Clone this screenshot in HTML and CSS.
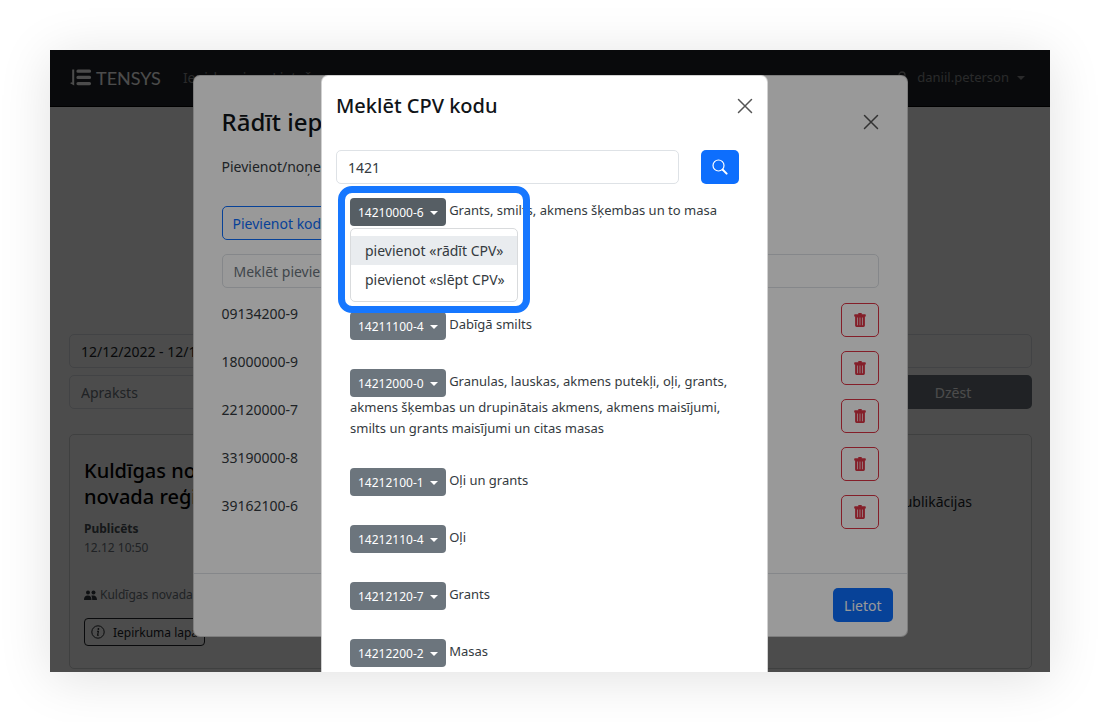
FILE: index.html
```html
<!DOCTYPE html>
<html lang="lv">
<head>
<meta charset="utf-8">
<title>Tensys</title>
<link rel="stylesheet" href="styles.css">
</head>
<body>
<svg class="sprite" aria-hidden="true">
  <symbol id="trash" viewBox="0 0 12 14"><path d="M4.300 0h3.400v1.200h3.300a.8.8 0 0 1 .8.8v1.400h-.9v9.200a1.400 1.400 0 0 1-1.400 1.400h-7a1.400 1.400 0 0 1-1.400-1.400V3.400H.2V2a.8.8 0 0 1 .8-.8h3.300zM3.200 4.400v7.800h.7V4.400zm2.450 0v7.800h.7V4.400zm2.450 0v7.800h.7V4.400z" fill="currentColor" fill-rule="evenodd"/></symbol>
  <symbol id="cross" viewBox="0 0 16 16"><path d="M1.500 1.500l13 13M14.500 1.500l-13 13" fill="none" stroke="currentColor" stroke-width="1.500" stroke-linecap="round"/></symbol>
</svg>
<div class="window">
  <header class="navbar">
    <a class="brand" href="#">
      <svg width="22" height="17" viewBox="0 0 22 17" aria-hidden="true"><path d="M2.200 .6h2v15.900l-4-2.200 1-1 1 .5z" fill="currentColor"/><path d="M8 2.200h11.500M8 8.400h11.500M8 14.600h11.500" stroke="currentColor" stroke-width="3.200" stroke-linecap="round"/></svg>
      TENSYS
    </a>
    <nav class="nav-links">
      <a href="#">Iepirkumi</a>
      <a href="#">Lietošana</a>
    </nav>
    <button class="user" type="button">
      <svg width="14" height="14" viewBox="0 0 14 14" aria-hidden="true"><circle cx="7" cy="4" r="3" fill="none" stroke="currentColor" stroke-width="1.300"/><path d="M1.500 13c0-3 2-5 5.500-5s5.500 2 5.500 5" fill="none" stroke="currentColor" stroke-width="1.300"/></svg>
      daniil.peterson <span class="caret"></span>
    </button>
  </header>
  <main class="page">
    <form class="filters">
      <input class="field" type="text" aria-label="Periods" value="12/12/2022 - 12/12/2022">
      <div class="filter-row">
        <input class="field" type="text" aria-label="Apraksts" placeholder="Apraksts">
        <button class="btn secondary" type="button">Dzēst</button>
      </div>
    </form>
    <article class="card">
      <div class="card-main">
        <h2 class="card-title">Kuldīgas novada<br>novada reģions</h2>
        <p class="meta"><strong>Publicēts</strong><br>12.12 10:50</p>
        <p class="org">
          <svg width="13" height="10" viewBox="0 0 13 10" aria-hidden="true" fill="currentColor"><circle cx="4" cy="2.500" r="2"/><circle cx="9.500" cy="2.500" r="2"/><path d="M0 10c0-3 1-4.600 3.800-4.600S7.500 7 7.500 10zM8.200 10c0-2-.2-3.200-1-4.200 3.500-1.200 5.800.4 5.800 4.200z"/></svg>
          Kuldīgas novada
        </p>
        <a class="page-link" href="#">
          <svg width="14" height="14" viewBox="0 0 14 14" aria-hidden="true"><circle cx="7" cy="7" r="6.200" fill="none" stroke="currentColor"/><circle cx="7.400" cy="4" r=".9" fill="currentColor"/><path d="M6 6.200h1.400L6.600 10.300h1.200" fill="none" stroke="currentColor" stroke-width="1.100"/></svg>
          Iepirkuma lapa
        </a>
      </div>
      <a class="card-side" href="#">Publikācijas</a>
    </article>
  </main>

  <div class="overlay">
    <section class="dialog codes" aria-label="Rādīt iepirkumus">
      <header class="dialog-head">
        <h1 class="codes-title">Rādīt iepirkumus</h1>
        <button class="close" type="button" aria-label="Aizvērt"><svg width="16" height="16"><use href="#cross"/></svg></button>
      </header>
      <div class="codes-body">
        <p class="lead">Pievienot/noņemt kodus</p>
        <button class="btn outline" type="button">Pievienot kodu</button>
        <input class="field code-search" type="text" aria-label="Meklēt pievienotos" placeholder="Meklēt pievienotos">
        <ul class="code-list">
          <li><span>09134200-9</span><button class="btn delete" type="button" aria-label="Dzēst 09134200-9"><svg width="12" height="14"><use href="#trash"/></svg></button></li>
          <li><span>18000000-9</span><button class="btn delete" type="button" aria-label="Dzēst 18000000-9"><svg width="12" height="14"><use href="#trash"/></svg></button></li>
          <li><span>22120000-7</span><button class="btn delete" type="button" aria-label="Dzēst 22120000-7"><svg width="12" height="14"><use href="#trash"/></svg></button></li>
          <li><span>33190000-8</span><button class="btn delete" type="button" aria-label="Dzēst 33190000-8"><svg width="12" height="14"><use href="#trash"/></svg></button></li>
          <li><span>39162100-6</span><button class="btn delete" type="button" aria-label="Dzēst 39162100-6"><svg width="12" height="14"><use href="#trash"/></svg></button></li>
        </ul>
      </div>
      <footer class="dialog-foot"><button class="btn primary" type="button">Lietot</button></footer>
    </section>
  </div>

  <div class="overlay top">
    <section class="dialog cpv" aria-label="Meklēt CPV kodu">
      <header class="cpv-head">
        <h1 class="cpv-title">Meklēt CPV kodu</h1>
        <button class="close" type="button" aria-label="Aizvērt"><svg width="16" height="16"><use href="#cross"/></svg></button>
      </header>
      <form class="search">
        <input class="field" type="text" aria-label="CPV kods" value="1421">
        <button class="btn primary icon" type="button" aria-label="Meklēt"><svg width="16" height="16" viewBox="0 0 16 16" aria-hidden="true"><circle cx="6.500" cy="6.500" r="5.500" fill="none" stroke="currentColor" stroke-width="1.200"/><path d="M10.800 10.800l3.800 3.800" stroke="currentColor" stroke-width="2" stroke-linecap="round"/></svg></button>
      </form>
      <ul class="results">
        <li class="open">
          <button class="tag active" type="button">14210000-6 <span class="caret"></span></button> Grants, smilts, akmens šķembas un to masa
          <div class="menu">
            <button class="item hover" type="button">pievienot «rādīt CPV»</button>
            <button class="item" type="button">pievienot «slēpt CPV»</button>
          </div>
          <div class="focus-frame"></div>
        </li>
        <li><button class="tag" type="button">14211000-3 <span class="caret"></span></button> Smilts</li>
        <li><button class="tag" type="button">14211100-4 <span class="caret"></span></button> Dabīgā smilts</li>
        <li><button class="tag" type="button">14212000-0 <span class="caret"></span></button> Granulas, lauskas, akmens putekļi, oļi, grants, akmens šķembas un drupinātais akmens, akmens maisījumi, smilts un grants maisījumi un citas masas</li>
        <li><button class="tag" type="button">14212100-1 <span class="caret"></span></button> Oļi un grants</li>
        <li><button class="tag" type="button">14212110-4 <span class="caret"></span></button> Oļi</li>
        <li><button class="tag" type="button">14212120-7 <span class="caret"></span></button> Grants</li>
        <li><button class="tag" type="button">14212200-2 <span class="caret"></span></button> Masas</li>
      </ul>
    </section>
  </div>
</div>
</body>
</html>
```
FILE: styles.css
```css
* { box-sizing: border-box; }
body {
  margin: 0;
  background: #fff;
  color: #343a40;
  font: 14px/21px "Noto Sans", "Open Sans", sans-serif;
}
h1, h2, p, ul { margin: 0; padding: 0; }
h1 { color: #101418; font-weight: 500; }
ul { list-style: none; }
a { color: inherit; text-decoration: none; }
button, input { font: inherit; color: inherit; }
button { cursor: pointer; }
.sprite { position: absolute; width: 0; height: 0; }

.window {
  position: relative;
  height: calc(100vh - 100px);
  margin: 50px;
  overflow: hidden;
  background: #fff;
  box-shadow: 0 6px 50px rgba(0, 0, 0, .12);
}

/* Navigation */
.navbar {
  display: flex;
  align-items: center;
  height: 57px;
  padding: 0 25px 1px 20px;
  background: #212529;
  border-bottom: 1px solid #000;
  color: #8c8e90;
}
.brand {
  display: flex;
  align-items: center;
  gap: 4px;
  color: #fff;
  font: 18px/24px Lato, sans-serif;
}
.nav-links { display: flex; gap: 26px; margin-left: 22px; flex: 1; }
.user {
  display: flex;
  align-items: center;
  gap: 8px;
  padding: 0;
  border: 0;
  background: none;
  font-size: 13px;
}
.caret {
  display: inline-block;
  border: 4px solid transparent;
  border-top-color: currentColor;
  border-bottom: 0;
}

/* Controls */
.field {
  width: 100%;
  height: 34px;
  padding: 0 11px;
  border: 1px solid #dee2e6;
  border-radius: 5px;
  background: #fff;
}
.field::placeholder { color: #6c757d; opacity: 1; }
.btn {
  height: 34px;
  padding: 0 10px;
  border: 1px solid transparent;
  border-radius: 5px;
  background: none;
}
.btn svg { display: block; margin: auto; }
.primary { background: #0d6efd; color: #fff; }
.secondary { background: #6c757d; color: #fff; }
.outline { border-color: #0d6efd; color: #0d6efd; }
.delete { width: 38px; border-color: #dc3545; color: #dc3545; padding: 0; }
.icon { width: 38px; padding: 0; flex: none; }
.close {
  display: flex;
  padding: 0;
  border: 0;
  background: none;
  color: #555;
}

/* Page */
.page { padding: 227px 18px 0 19px; color: #212529; }
.filters { display: grid; gap: 7px; }
.filter-row { display: grid; grid-template-columns: 1fr 158px; gap: 8px; }
.card {
  display: flex;
  justify-content: space-between;
  margin-top: 25px;
  padding: 23px 59px 22px 14px;
  border: 1px solid #d5d6d7;
  border-radius: 5px;
}
.card-title { font-size: 20px; line-height: 26px; font-weight: 500; color: #000; }
.meta { margin-top: 9px; font-size: 12px; line-height: 19px; color: #6c757d; }
.meta strong { color: #495057; }
.org {
  display: flex;
  align-items: center;
  gap: 3px;
  margin-top: 28px;
  font-size: 12px;
  line-height: 20px;
  color: #6c757d;
}
.org svg { color: #343a40; }
.page-link {
  display: inline-flex;
  align-items: center;
  gap: 8px;
  height: 28px;
  margin-top: 13px;
  padding: 0 6px;
  border: 1px solid #212529;
  border-radius: 4px;
  font-size: 12px;
}
.card-side { margin-top: 33px; }

/* Dialogs */
.overlay {
  position: absolute;
  inset: 0;
  overflow: hidden;
  padding-top: 25px;
  background: rgba(0, 0, 0, .5);
}
.top {
  padding-right: 11px;
  background: rgba(0, 0, 0, .4);
}
.dialog {
  margin: 0 auto;
  background: #fff;
  border: 1px solid rgba(0, 0, 0, .18);
  border-radius: 7px;
}
.codes { max-width: 715px; }
.dialog-head {
  display: flex;
  justify-content: space-between;
  align-items: center;
  padding: 31px 28px 0;
}
.codes-title { font-size: 24px; line-height: 30px; }
.codes-body { padding: 19px 28px 44px; }
.lead { margin-bottom: 29px; }
.code-search { display: block; margin: 14px 0 15px; }
.code-list { display: grid; gap: 14px; }
.code-list li { display: flex; justify-content: space-between; }
.dialog-foot {
  display: flex;
  justify-content: flex-end;
  padding: 14px;
  border-top: 1px solid #dee2e6;
}

.cpv { max-width: 447px; }
.cpv-head {
  display: flex;
  justify-content: space-between;
  align-items: center;
  padding: 16px 14px 0;
}
.cpv-title { font-size: 20px; line-height: 28px; }
.search {
  display: flex;
  gap: 22px;
  padding: 30px 28px 0 14px;
}
.results {
  display: grid;
  gap: 29px;
  padding: 14px 28px;
  font-size: 13px;
}
.open { position: relative; }
.tag {
  height: 28px;
  padding: 0 8px;
  border: 0;
  border-radius: 4px;
  background: #6c757d;
  color: #fff;
  font-size: 12px;
  vertical-align: middle;
}
.tag .caret { margin-left: 3px; vertical-align: 2px; }
.active { background: #565e64; }
.menu {
  position: absolute;
  top: 30px;
  left: 0;
  z-index: 1;
  width: 168px;
  padding: 7px 0;
  border: 1px solid #d9dbdd;
  border-radius: 5px;
  background: #fff;
  font-size: 14px;
}
.item {
  display: block;
  width: 100%;
  height: 29px;
  padding: 0 14px;
  border: 0;
  background: none;
  text-align: left;
  white-space: nowrap;
}
.hover { background: #e9ecef; }
.focus-frame {
  position: absolute;
  top: -12px;
  left: -12px;
  z-index: 2;
  width: 192px;
  height: 127px;
  border: 7px solid #1677ff;
  border-radius: 14px;
  pointer-events: none;
}
```
